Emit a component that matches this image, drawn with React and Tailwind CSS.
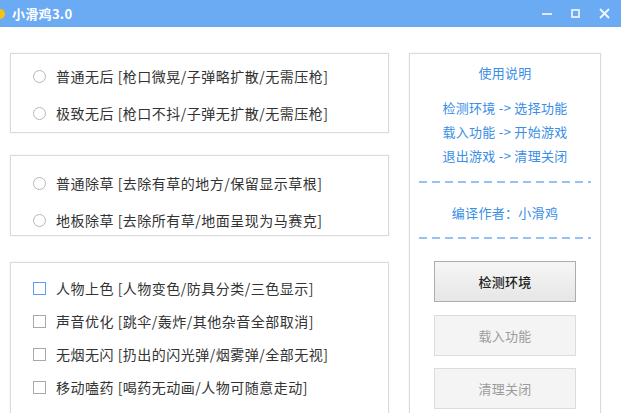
import React from "react";

const font = { fontFamily: '"Noto Sans CJK SC", "Noto Sans", sans-serif' };

function Radio({ label }) {
  return (
    <div className="flex items-center h-[24px]">
      <span className="w-[13px] h-[13px] rounded-full border border-[#b8b8b8] bg-white shrink-0"></span>
      <span className="ml-[10px] text-[14px] text-[#333] whitespace-nowrap tracking-[0.5px]">{label}</span>
    </div>
  );
}

function Check({ label, active }) {
  return (
    <div className="flex items-center h-[24px]">
      <span
        className={
          active
            ? "w-[13px] h-[13px] border border-[#5aa0ee] bg-white shrink-0"
            : "w-[13px] h-[13px] border border-[#a8a8a8] bg-white shrink-0"
        }
      ></span>
      <span className="ml-[10px] text-[14px] text-[#333] whitespace-nowrap tracking-[0.5px]">{label}</span>
    </div>
  );
}

function Dash() {
  return (
    <svg width="172" height="2" className="block">
      <line x1="0" y1="1" x2="172" y2="1" stroke="#6fb0f0" strokeWidth="1.5" strokeDasharray="8 5" />
    </svg>
  );
}

export default function App() {
  return (
    <div className="w-[621px] h-[413px] bg-white overflow-hidden" style={font}>
      {/* title bar */}
      <div className="h-[27px] bg-[#6aabf4] flex items-center overflow-hidden">
        <span className="w-[10px] h-[10px] rounded-full bg-[#f3c316] -ml-[5px]"></span>
        <span className="ml-[7px] text-white font-bold text-[13px] tracking-[0.3px]">小滑鸡3.0</span>
        <div className="ml-auto flex items-center h-full text-white">
          <span className="w-[10px] h-[2px] bg-[#dbe9fb] mr-[19px]"></span>
          <span className="w-[9px] h-[9px] border-2 border-[#dbe9fb] mr-[19px]"></span>
          <svg width="11" height="11" viewBox="0 0 11 11" className="mr-[11px]">
            <path d="M1 1L10 10M10 1L1 10" stroke="#eef5fe" strokeWidth="2" />
          </svg>
        </div>
      </div>

      <div className="flex pl-[10px] pt-[26px]">
        {/* left column */}
        <div className="w-[379px] flex flex-col">
          <div className="h-[80px] border border-[#dadada] shadow-[0_0_2px_rgba(0,0,0,0.08)] pl-[22px] pt-[10px] flex flex-col gap-[13px]">
            <Radio label="普通无后 [枪口微晃/子弹略扩散/无需压枪]" />
            <Radio label="极致无后 [枪口不抖/子弹无扩散/无需压枪]" />
          </div>
          <div className="mt-[22px] h-[81px] border border-[#dadada] shadow-[0_0_2px_rgba(0,0,0,0.08)] pl-[22px] pt-[15px] flex flex-col gap-[13px]">
            <Radio label="普通除草 [去除有草的地方/保留显示草根]" />
            <Radio label="地板除草 [去除所有草/地面呈现为马赛克]" />
          </div>
          <div className="mt-[26px] h-[200px] border border-[#dadada] shadow-[0_0_2px_rgba(0,0,0,0.08)] pl-[22px] pt-[13px] flex flex-col gap-[9px]">
            <Check active label="人物上色 [人物变色/防具分类/三色显示]" />
            <Check label="声音优化 [跳伞/轰炸/其他杂音全部取消]" />
            <Check label="无烟无闪 [扔出的闪光弹/烟雾弹/全部无视]" />
            <Check label="移动嗑药 [喝药无动画/人物可随意走动]" />
          </div>
        </div>

        {/* right column */}
        <div className="ml-[20px] w-[192px] h-[400px] border border-[#dadada] shadow-[0_0_2px_rgba(0,0,0,0.08)] flex flex-col items-center pt-[9px] text-[#3a8ee6] text-[13px] tracking-[0.3px]">
          <div className="h-[20px] leading-[20px]">使用说明</div>
          <div className="mt-[13px] h-[24px] leading-[24px]">检测环境 -&gt; 选择功能</div>
          <div className="h-[24px] leading-[24px]">载入功能 -&gt; 开始游戏</div>
          <div className="h-[24px] leading-[24px]">退出游戏 -&gt; 清理关闭</div>
          <div className="mt-[13px]"><Dash /></div>
          <div className="mt-[20px] h-[20px] leading-[20px]">编译作者：小滑鸡</div>
          <div className="mt-[14px]"><Dash /></div>
          <button className="mt-[22px] w-[142px] h-[41px] border border-[#adadad] bg-gradient-to-b from-[#f6f6f6] to-[#e6e6e6] text-[13px] text-[#222] font-medium">检测环境</button>
          <button className="mt-[13px] w-[142px] h-[41px] border border-[#dcdcdc] bg-[#f4f4f4] text-[13px] text-[#9c9c9c]">载入功能</button>
          <button className="mt-[12px] w-[142px] h-[41px] border border-[#dcdcdc] bg-[#f4f4f4] text-[13px] text-[#9c9c9c]">清理关闭</button>
        </div>
      </div>
    </div>
  );
}
